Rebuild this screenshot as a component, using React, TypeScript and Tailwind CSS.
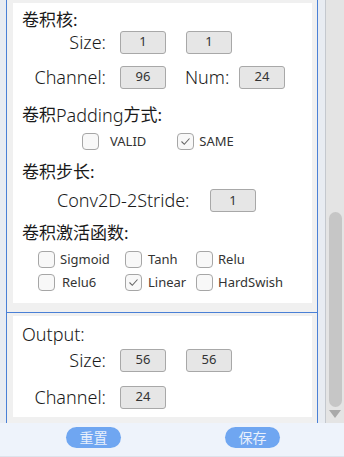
import React from "react";

const FONT = "font-['Noto_Sans','Noto_Sans_CJK_SC',sans-serif]";

function ValBox({ v }: { v: string }) {
  return (
    <div className="w-[46px] h-[23px] border border-[#a8a8a8] bg-[#e6e6e6] rounded-[3px] flex items-center justify-center text-[13px] text-[#333]">
      {v}
    </div>
  );
}

function Check({ checked = false }: { checked?: boolean }) {
  return (
    <div className="w-[17px] h-[17px] rounded-[4px] border border-[#a6a6a6] bg-[#f8f8f8] flex items-center justify-center shrink-0">
      {checked && (
        <svg width="11" height="11" viewBox="0 0 11 11">
          <path d="M1.5 5.5 L4.3 8.3 L9.5 2.5" fill="none" stroke="#666" strokeWidth="1.1" />
        </svg>
      )}
    </div>
  );
}

function Opt({ label, checked, gap = "ml-[6px]" }: { label: string; checked?: boolean; gap?: string }) {
  return (
    <div className="flex items-center">
      <Check checked={checked} />
      <span className={`${gap} text-[13px] text-[#333]`}>{label}</span>
    </div>
  );
}

const heading = "h-[20px] flex items-center text-[17px] text-[#1a1a1a] pl-[9px]";
const label = "text-[18px] font-light text-[#1a1a1a]";

export default function App() {
  return (
    <div className={`w-[344px] h-[457px] bg-[#e8ecf2] flex flex-col overflow-hidden ${FONT}`}>
      <div className="h-[423px] flex">
        <div className="w-[6px]" />
        {/* main panel */}
        <div className="w-[312px] border-x border-[#4a80d6] bg-[#f0f0f0] flex flex-col">
          <div className="pl-[6px] pr-[5px] pt-[3px]">
            <div className="bg-white pt-[7px] pb-[11px] h-[300px] flex flex-col">
              <div className={`${heading} h-[18px]`}>卷积核:</div>
              <div className="h-[24px] flex items-center">
                <div className={`w-[93px] text-right ${label}`}>Size:</div>
                <div className="ml-[14px]"><ValBox v="1" /></div>
                <div className="ml-[20px]"><ValBox v="1" /></div>
              </div>
              <div className="mt-[11px] h-[24px] flex items-center">
                <div className={`w-[93px] text-right ${label}`}>Channel:</div>
                <div className="ml-[14px]"><ValBox v="96" /></div>
                <div className={`ml-[19px] w-[54px] ${label}`}>Num:</div>
                <ValBox v="24" />
              </div>
              <div className={`mt-[16px] ${heading}`}>
                卷积<span className="text-[18px] font-light">Padding</span>方式:
              </div>
              <div className="mt-[7px] h-[20px] flex items-center pl-[69px]">
                <Opt label="VALID" gap="ml-[11px]" />
                <div className="ml-[31px]">
                  <Opt label="SAME" checked gap="ml-[5px]" />
                </div>
              </div>
              <div className={`mt-[10px] ${heading}`}>卷积步长:</div>
              <div className="mt-[7px] h-[24px] flex items-center pl-[44px]">
                <span className={`w-[153px] ${label}`}>Conv2D-2Stride:</span>
                <ValBox v="1" />
              </div>
              <div className={`mt-[10px] ${heading}`}>卷积激活函数:</div>
              <div className="mt-[7px] h-[20px] grid grid-cols-[87px_71px_80px] pl-[25px] items-center">
                <Opt label="Sigmoid" gap="ml-[5px]" />
                <Opt label="Tanh" />
                <Opt label="Relu" gap="ml-[5px]" />
              </div>
              <div className="mt-[4px] h-[20px] grid grid-cols-[87px_71px_80px] pl-[25px] items-center">
                <Opt label="Relu6" gap="ml-[7px]" />
                <Opt label="Linear" checked />
                <Opt label="HardSwish" gap="ml-[5px]" />
              </div>
            </div>
          </div>
          <div className="mt-[9px] h-px bg-[#4a80d6] -mx-px" />
          <div className="pl-[6px] pr-[5px] pt-[3px]">
            <div className="bg-white pt-[8px] pb-[8px] h-[101px] flex flex-col">
              <div className={`${heading} pl-[8px] text-[18px] font-light`}>Output:</div>
              <div className="mt-[4px] h-[24px] flex items-center">
                <div className={`w-[93px] text-right ${label}`}>Size:</div>
                <div className="ml-[14px]"><ValBox v="56" /></div>
                <div className="ml-[20px]"><ValBox v="56" /></div>
              </div>
              <div className="mt-[13px] h-[24px] flex items-center">
                <div className={`w-[93px] text-right ${label}`}>Channel:</div>
                <div className="ml-[14px]"><ValBox v="24" /></div>
              </div>
            </div>
          </div>
        </div>
        <div className="w-[7px]" />
        {/* scrollbar */}
        <div className="w-[19px] border-l border-[#c4c8ce] bg-[#e4e4e4] flex flex-col items-center">
          <div className="mt-[212px] w-[13px] h-[195px] rounded-full bg-[#c6c6c6]" />
          <svg className="mt-[3px]" width="12" height="8" viewBox="0 0 12 8">
            <path d="M0 0 L12 0 L6 8 Z" fill="#a9a9a9" />
          </svg>
        </div>
      </div>
      <div className="flex-1 bg-[#eef3fb] border-b border-[#dde3ec] flex items-start pt-[4px]">
        <button className="ml-[66px] w-[55px] h-[21px] rounded-full bg-[#6fa6f1] text-[#e8f0fc] text-[14px] leading-none">
          重置
        </button>
        <button className="ml-[104px] w-[55px] h-[21px] rounded-full bg-[#6fa6f1] text-[#e8f0fc] text-[14px] leading-none">
          保存
        </button>
      </div>
    </div>
  );
}
